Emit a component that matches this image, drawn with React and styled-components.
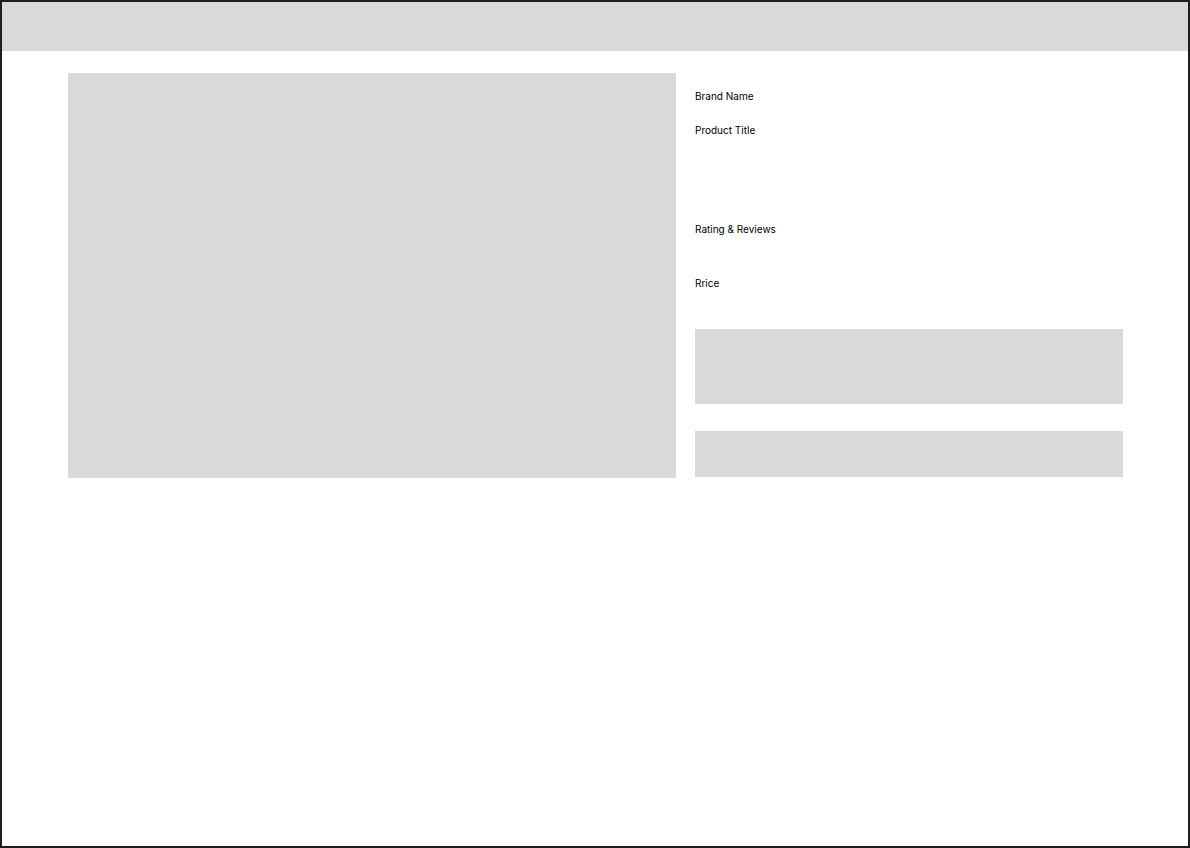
import React from "react";
import styled, { createGlobalStyle } from "styled-components";

const GlobalStyle = createGlobalStyle`
  * { box-sizing: border-box; }
  html, body { margin: 0; padding: 0; background: #ffffff; }
  body { font-family: Inter, "Noto Sans", "Liberation Sans", sans-serif; }
`;

const Frame = styled.div`
  width: 1190px;
  height: 848px;
  border: 2px solid #1e1e1e;
  background: #ffffff;
  display: flex;
  flex-direction: column;
`;

const Header = styled.header`
  height: 49px;
  background: #d9d9d9;
  flex-shrink: 0;
`;

const Main = styled.main`
  display: flex;
  gap: 19px;
  padding: 22px 0 0 66px;
`;

const Placeholder = styled.div`
  background: #d9d9d9;
  width: ${(p) => p.$w || "100%"};
  height: ${(p) => p.$h}px;
  margin-top: ${(p) => p.$mt || 0}px;
`;

const Details = styled.section`
  width: 428px;
  display: flex;
  flex-direction: column;
  padding-top: 17px;
`;

const Label = styled.div`
  font-size: 10px;
  line-height: 12px;
  color: #000000;
  margin-top: ${(p) => p.$mt || 0}px;
`;

export default function App() {
  return (
    <>
      <GlobalStyle />
      <Frame>
        <Header />
        <Main>
          <Placeholder $w="608px" $h={405} />
          <Details>
            <Label>Brand Name</Label>
            <Label $mt={22}>Product Title</Label>
            <Label $mt={87}>Rating &amp; Reviews</Label>
            <Label $mt={42}>Rrice</Label>
            <Placeholder $h={75} $mt={40} />
            <Placeholder $h={46} $mt={27} />
          </Details>
        </Main>
      </Frame>
    </>
  );
}
